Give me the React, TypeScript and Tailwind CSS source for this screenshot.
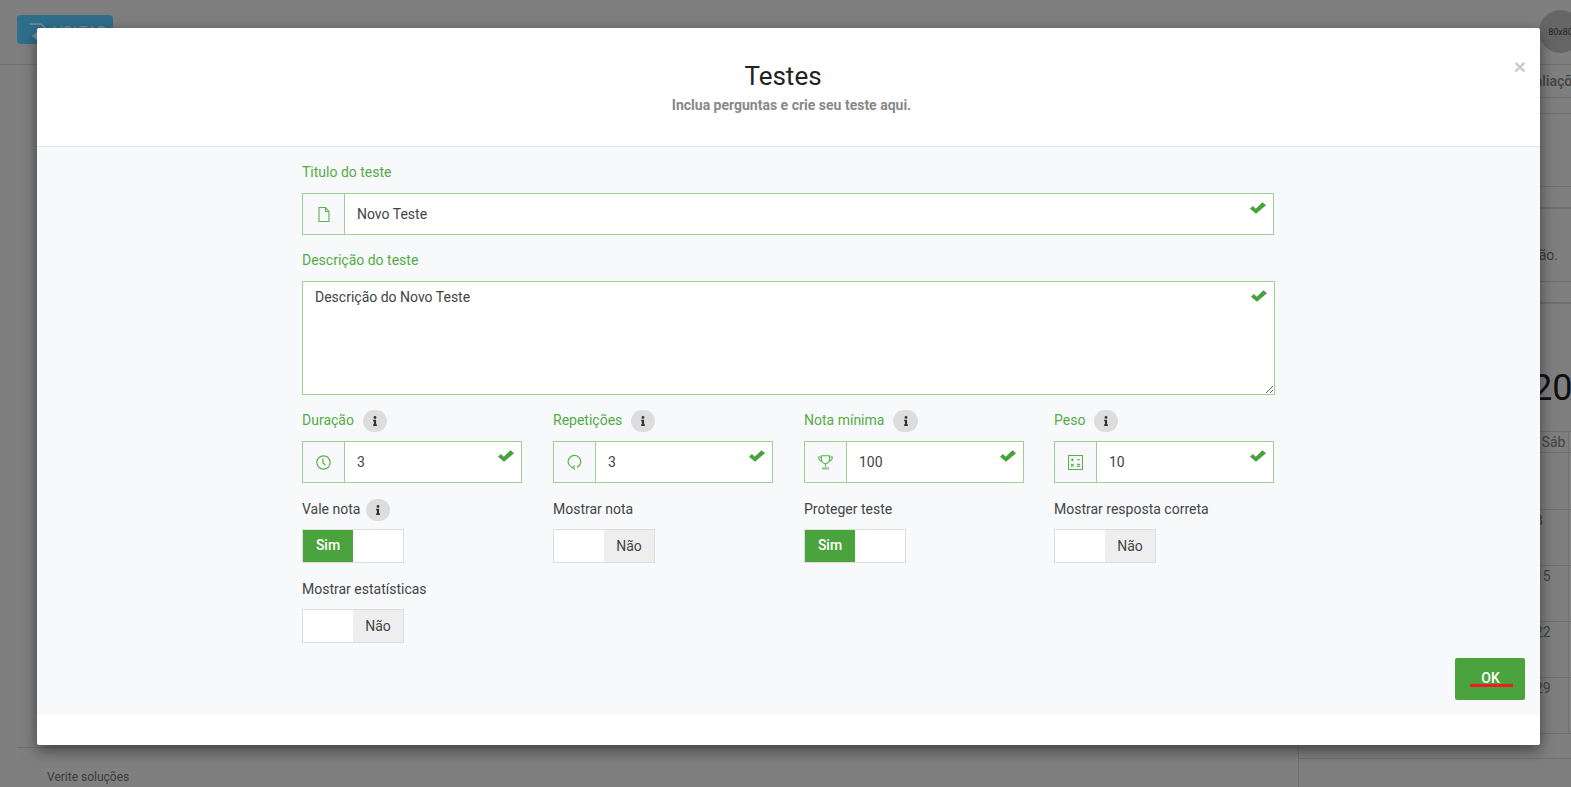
import type { ReactNode } from "react";
import { FaInfo } from "react-icons/fa";

// Simple line style icons used in the input addons
function DocIcon() {
    return (
        <svg width="12" height="15" viewBox="0 0 12 15" fill="none" stroke="#5cb050" strokeWidth="1.1">
            <path d="M1 .5h6.5L11 4.5v10H1z" />
            <path d="M7.5 .5v4H11" />
        </svg>
    );
}

function ClockIcon() {
    return (
        <svg width="15" height="15" viewBox="0 0 15 15" fill="none" stroke="#5cb050" strokeWidth="1.2">
            <circle cx="7.5" cy="7.5" r="6.7" />
            <path d="M7 3.2v4.5l2.5 2.6" />
        </svg>
    );
}

function ReloadIcon() {
    return (
        <svg width="15" height="16" viewBox="0 0 15 16" fill="none" stroke="#5cb050" strokeWidth="1.2">
            <path d="M5.5 13.6A6.3 6.3 0 1 1 10 13.4" />
            <path d="M8 11.6l-2.4 2 2.4 1.9" />
        </svg>
    );
}

function TrophyIcon() {
    return (
        <svg width="15" height="15" viewBox="0 0 15 15" fill="none" stroke="#5cb050" strokeWidth="1.1">
            <path d="M3.5 .8h8v3.5c0 2.6-1.7 4.4-4 4.4s-4-1.8-4-4.4z" />
            <path d="M3.5 2H.7c0 2.8 1.2 4 3.4 4.4M11.5 2h2.8c0 2.8-1.2 4-3.4 4.4" />
            <path d="M7.5 8.7v3" />
            <path d="M4 12.3h7v2.2H4z" fill="#8fcb86" stroke="none" />
        </svg>
    );
}

function CalcIcon() {
    return (
        <svg width="15" height="15" viewBox="0 0 15 15" fill="none" stroke="#5cb050" strokeWidth="1.1">
            <rect x=".5" y=".5" width="14" height="14" />
            <path d="M2.8 4.8h3M4.3 3.3v3M9 4.8h3.2M3 9l2.6 2.6M5.6 9L3 11.6M9 9.4h3.2M9 11.4h3.2" />
        </svg>
    );
}

function CheckMark({ className }: { className: string }) {
    return (
        <svg width="16" height="12" viewBox="0 0 15 11" fill="#46a23c" className={className}>
            <path d="M0 6.2 2.7 3.6 5.4 6.2 11.7 0 15 2.9 5.6 11z" />
        </svg>
    );
}

function InfoBadge({ width = 24, gap = 9 }: { width?: number; gap?: number }) {
    return (
        <span
            className="mt-[2px] flex h-[22px] items-center justify-center rounded-full bg-[#dddddd] text-[#333]"
            style={{ width, marginLeft: gap }}
        >
            <FaInfo size={10} />
        </span>
    );
}

function GreenField({ label, icon, value, badgeWidth }: { label: string; icon: ReactNode; value: string; badgeWidth?: number }) {
    return (
        <div className="flex w-[220px] flex-col gap-[9px]">
            <div className="flex h-[22px] items-center pb-[2px] text-[#55ab47]">
                {label}
                <InfoBadge width={badgeWidth} />
            </div>
            <InputBox icon={icon} value={value} />
        </div>
    );
}

function InputBox({ icon, value }: { icon: ReactNode; value: string }) {
    return (
        <div className="relative flex h-[42px] border border-[#9cd193]">
            <div className="flex w-[42px] shrink-0 items-center justify-center border-r border-[#9cd193]">{icon}</div>
            <input readOnly value={value} className="min-w-0 flex-1 bg-white pl-[12px] text-[#444] outline-none" />
            <CheckMark className="absolute right-[7px] top-[8px]" />
        </div>
    );
}

function Toggle({ on, label, info }: { on: boolean; label: string; info?: boolean }) {
    return (
        <div className="flex w-[220px] flex-col gap-[9px]">
            <div className="flex h-[22px] items-center pb-[1px] text-[#444]">
                {label}
                {info && <InfoBadge gap={6} />}
            </div>
            <div className="flex h-[34px] w-[102px] border border-[#dddddd] bg-white">
                {on ? (
                    <div className="flex w-[50px] items-center justify-center bg-[#4aa33c] pb-[2px] font-medium text-white">Sim</div>
                ) : (
                    <>
                        <div className="w-[50px]" />
                        <div className="flex w-[50px] items-center justify-center bg-[#eeeeee] pb-[1px] text-[#444]">Não</div>
                    </>
                )}
            </div>
        </div>
    );
}

// The page that sits dimmed behind the modal
function BackgroundPage() {
    const rows = [
        { h: "h-[57px]", n: "" },
        { h: "h-[56px]", n: "8" },
        { h: "h-[56px]", n: "15" },
        { h: "h-[56px]", n: "22" },
        { h: "h-[56px]", n: "29" },
    ];

    return (
        <div className="flex h-full flex-col text-[#3c3c3c]">
            <div className="flex h-[65px] shrink-0 items-start justify-between overflow-hidden border-b border-[#707070]">
                <div className="ml-[17px] mt-[15px] flex h-[29px] w-[96px] items-start gap-[7px] rounded-[4px] bg-[#2f6f8c] pl-[13px] pt-[8px] text-[15px] leading-[18px] text-[#7b8f99]">
                    <svg width="16" height="20" viewBox="0 0 16 20" fill="none" stroke="#7b8f99" strokeWidth="1.5" className="shrink-0">
                        <path d="M0 1h9c3 0 5 2 6 5" />
                        <path d="M3 13l4-3v6z" fill="#7b8f99" />
                    </svg>
                    VOLTAR
                </div>
                <div className="mr-[-11px] mt-[10px] flex h-[43px] w-[43px] items-center justify-center rounded-full bg-[#666666] text-[9px] text-[#222]">
                    80x80
                </div>
            </div>
            <div className="flex min-h-0 flex-1">
                <div className="flex w-[1299px] shrink-0 flex-col justify-end border-r border-[#707070]">
                    <div className="ml-[17px] flex h-[40px] items-end border-t border-[#707070] pl-[30px] text-[12px] text-[#3c3c3c]">
                        Verite soluções
                    </div>
                </div>
                <div className="min-w-0 flex-1 overflow-hidden">
                    <div className="flex h-[33px] items-center whitespace-nowrap border-b border-[#707070] pl-[220px] text-[14px] font-medium text-[#444]">
                        Avaliações
                    </div>
                    <div className="h-[16px] border-b border-[#707070]" />
                    <div className="h-[73px] border-b border-[#707070]" />
                    <div className="h-[22px] border-b-2 border-[#707070]" />
                    <div className="flex h-[73px] items-end justify-end border-b border-[#707070] pb-[16px] pr-[13px] text-[14px]">ão.</div>
                    <div className="h-[22px] border-b-2 border-[#707070]" />
                    <div className="flex h-[127px] items-end pb-[23px] pl-[233px] text-[36px] leading-[40px] text-[#111]">20</div>
                    <div className="flex h-[22px] border-y border-[#707070] pl-[232px] text-[14px] text-[#444]">
                        <div className="flex w-[38px] items-center justify-center border-r border-[#707070] pl-[8px]">Sáb</div>
                    </div>
                    {rows.map((r, i) => (
                        <div key={i} className={`flex ${r.h} border-b border-[#707070] pl-[232px] text-[14px] text-[#444]`}>
                            <div className="w-[38px] border-r border-[#707070] pl-[4px]">{r.n}</div>
                        </div>
                    ))}
                    <div className="h-[25px] border-b border-[#707070]" />
                </div>
            </div>
        </div>
    );
}

export default function App() {
    return (
        <div className="relative h-[787px] w-full overflow-hidden bg-[#7f7f7f] font-[Roboto,sans-serif] text-[14px] leading-[20px]">
            <BackgroundPage />

            {/* Modal */}
            <div className="absolute left-[37px] top-[28px] w-[1503px] rounded-[2px] bg-white shadow-[0_5px_15px_rgba(0,0,0,0.5)]">
                <span className="absolute right-[14px] top-[27px] font-['Liberation_Sans',sans-serif] text-[21px] font-bold leading-[24px] text-[#cccccc]">×</span>

                <div className="flex h-[119px] flex-col items-center border-b border-[#e7e7e7] pt-[31px]">
                    <h1 className="mr-[11px] text-[26px] leading-[34px] text-[#222]">Testes</h1>
                    <p className="ml-[6px] mt-[2px] font-bold text-[#888888]">Inclua perguntas e crie seu teste aqui.</p>
                </div>

                <div className="bg-[#f8f9fb] pt-[15px]">
                    <div className="ml-[265px] w-[972px]">
                        <label className="mb-[11px] block text-[#55ab47]">Titulo do teste</label>
                        <InputBox icon={<DocIcon />} value="Novo Teste" />

                        <label className="mb-[11px] mt-[15px] block text-[#55ab47]">Descrição do teste</label>
                        <div className="relative w-[973px]">
                            <textarea
                                readOnly
                                defaultValue="Descrição do Novo Teste"
                                className="block h-[114px] w-full border border-[#9cd193] bg-white pl-[12px] pt-[5px] text-[#444] outline-none"
                            />
                            <CheckMark className="absolute right-[8px] top-[9px]" />
                        </div>

                        <div className="mt-[15px] grid grid-cols-[251px_251px_250px_220px] gap-y-[15px]">
                            <GreenField label="Duração" icon={<ClockIcon />} value="3" />
                            <GreenField label="Repetições" icon={<ReloadIcon />} value="3" />
                            <GreenField label="Nota mínima" icon={<TrophyIcon />} value="100" badgeWidth={25} />
                            <GreenField label="Peso" icon={<CalcIcon />} value="10" />

                            <Toggle on label="Vale nota" info />
                            <Toggle on={false} label="Mostrar nota" />
                            <Toggle on label="Proteger teste" />
                            <Toggle on={false} label="Mostrar resposta correta" />

                            <Toggle on={false} label="Mostrar estatísticas" />
                        </div>
                    </div>

                    <div className="flex justify-end pb-[15px] pr-[15px] pt-[15px]">
                        <button className="flex h-[42px] w-[70px] items-center justify-center rounded-[2px] bg-[#4aa33c] font-medium text-white">
                            <span className="ml-[3px] mt-[1px] block w-[43px] border-b-[3px] border-[#ee1c25] pr-[2px] text-center leading-[12px]">OK</span>
                        </button>
                    </div>
                </div>

                <div className="h-[30px]" />
            </div>
        </div>
    );
}
